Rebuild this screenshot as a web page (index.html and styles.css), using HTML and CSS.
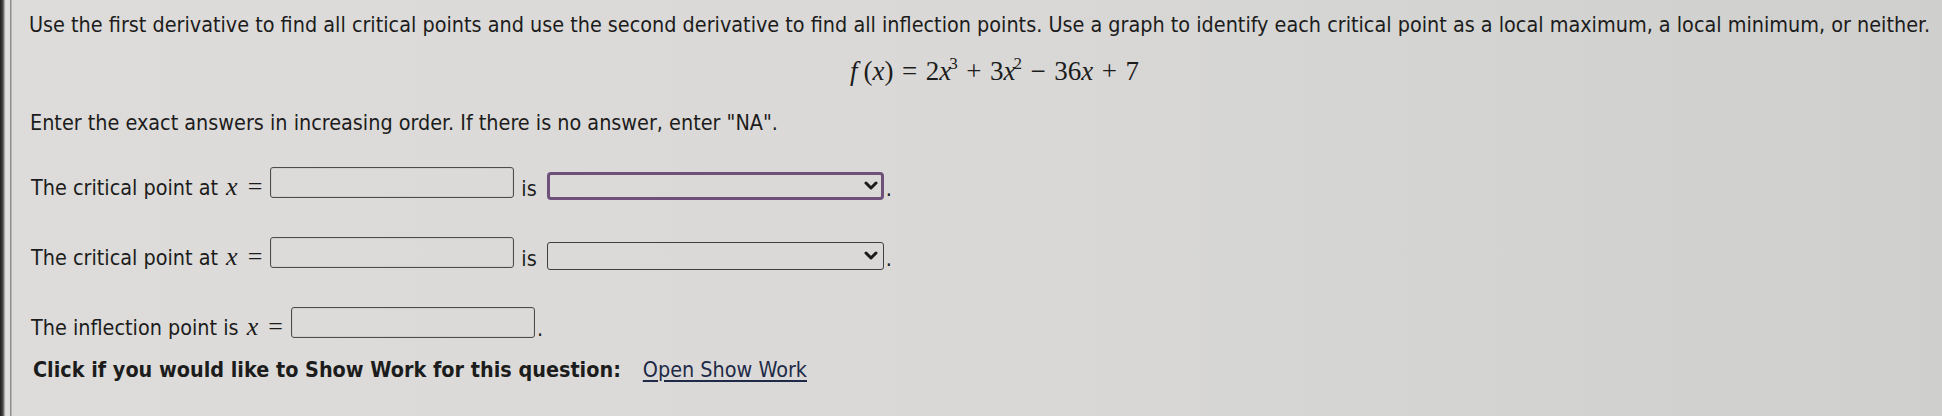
FILE: index.html
```html
<!DOCTYPE html>
<html lang="en">
<head>
<meta charset="utf-8">
<title>Critical and inflection points</title>
<link rel="stylesheet" href="styles.css">
</head>
<body>
<div class="page">
  <div class="edge"></div>
  <main class="content">
    <p class="intro">Use the first derivative to find all critical points and use the second derivative to find all inflection points. Use a graph to identify each critical point as a local maximum, a local minimum, or neither.</p>
    <div class="formula"><i>f</i><span class="fs"></span>(<i>x</i>)<span class="op">=</span>2<i>x</i><sup>3</sup><span class="op">+</span>3<i>x</i><sup>2</sup><span class="op">&minus;</span>36<i>x</i><span class="op">+</span>7</div>
    <p class="note">Enter the exact answers in increasing order. If there is no answer, enter "NA".</p>

    <div class="row">
      <span class="label">The critical point at <span class="math"><i>x</i><span class="eq">=</span></span></span>
      <input class="answer" type="text" aria-label="critical point 1">
      <span class="is">is</span>
      <span class="choice focused">
        <select aria-label="classification 1"><option></option><option>local maximum</option><option>local minimum</option><option>neither</option></select>
        <svg class="chev" viewBox="0 0 14 10" width="14" height="10"><path d="M2 2 L7 7 L12 2" fill="none" stroke="#1b1b1b" stroke-width="3" stroke-linecap="round" stroke-linejoin="round"/></svg>
      </span>
      <span class="dot">.</span>
    </div>

    <div class="row">
      <span class="label">The critical point at <span class="math"><i>x</i><span class="eq">=</span></span></span>
      <input class="answer" type="text" aria-label="critical point 2">
      <span class="is">is</span>
      <span class="choice">
        <select aria-label="classification 2"><option></option><option>local maximum</option><option>local minimum</option><option>neither</option></select>
        <svg class="chev" viewBox="0 0 14 10" width="14" height="10"><path d="M2 2 L7 7 L12 2" fill="none" stroke="#1b1b1b" stroke-width="3" stroke-linecap="round" stroke-linejoin="round"/></svg>
      </span>
      <span class="dot">.</span>
    </div>

    <div class="row">
      <span class="label">The inflection point is <span class="math"><i>x</i><span class="eq">=</span></span></span>
      <input class="answer" type="text" aria-label="inflection point">
      <span class="dot">.</span>
    </div>

    <p class="showwork"><b>Click if you would like to Show Work for this question:</b><a href="#" class="open">Open Show Work</a></p>
  </main>
</div>
</body>
</html>
```
FILE: styles.css
```css
html, body {
  margin: 0;
  padding: 0;
  height: 100%;
}
body {
  background: linear-gradient(90deg, #dddcda 0%, #dad9d7 45%, #d4d4d2 75%, #cfcfcd 100%);
  color: #1c1c1c;
  font-family: "DejaVu Sans Condensed", "DejaVu Sans", sans-serif;
  font-stretch: condensed;
  font-size: 21.4px;
}
.page {
  display: flex;
  min-height: 416px;
}
.edge {
  width: 12px;
  flex: none;
  background: linear-gradient(90deg, #1e1e1e 0px, #4a4a48 3px, #cfcecc 5px, #e3e2e0 6px, #e0dfdd 10px, #8e8e8c 10px, #8e8e8c 11px, #dcdbd9 12px);
}
.content {
  flex: 1;
  padding-left: 17px;
}
.intro {
  margin: 0;
  line-height: 28px;
  padding-top: 11px;
}
.formula {
  margin-top: 16px;
  text-align: center;
  padding-left: 18px;
  font-family: "Liberation Serif", serif;
  font-size: 27px;
  line-height: 32px;
}
.formula .fs {
  display: inline-block;
  width: 6px;
}
.formula .op {
  padding: 0 8.5px;
}
.formula sup {
  font-size: 17px;
  line-height: 0;
  vertical-align: 11px;
  margin-left: -2px;
}
.note {
  margin: 22px 0 0 1px;
  line-height: 28px;
}
.row {
  display: flex;
  align-items: flex-end;
  height: 34px;
  margin-top: 30px;
  padding-left: 2px;
}
.row + .row {
  margin-top: 36px;
}
.label {
  line-height: 24px;
  margin-bottom: 1px;
  margin-right: 8px;
}
.math {
  font-family: "Liberation Serif", serif;
  font-size: 26px;
  line-height: 24px;
}
.math i {
  margin-left: 2px;
}
.math .eq {
  margin-left: 10px;
}
.answer {
  box-sizing: border-box;
  width: 244px;
  height: 31px;
  margin: 0 0 3px 0;
  border: 1px solid #4c4c4c;
  border-radius: 3px;
  background: transparent;
  box-shadow: inset 0 0 0 1px rgba(0,0,0,0.05);
}
.is {
  line-height: 24px;
  margin: 0 10px 0 7px;
}
.choice {
  position: relative;
  display: block;
  margin-bottom: 1px;
}
.choice select {
  display: block;
  box-sizing: border-box;
  width: 337px;
  height: 28px;
  appearance: none;
  -webkit-appearance: none;
  background: transparent;
  border: 1px solid #3f3f3f;
  border-radius: 3px;
  font: inherit;
}
.choice.focused select {
  border: 3px solid #6e5079;
  border-radius: 4px;
}
.chev {
  position: absolute;
  right: 6px;
  top: 9px;
}
.dot {
  line-height: 24px;
  margin-left: 2px;
}
.showwork {
  margin: 15px 0 0 4px;
  line-height: 28px;
}
.showwork b {
  font-weight: bold;
}
.open {
  margin-left: 22px;
  color: #1e2a48;
  text-decoration: underline;
  text-underline-offset: 3px;
}
```
